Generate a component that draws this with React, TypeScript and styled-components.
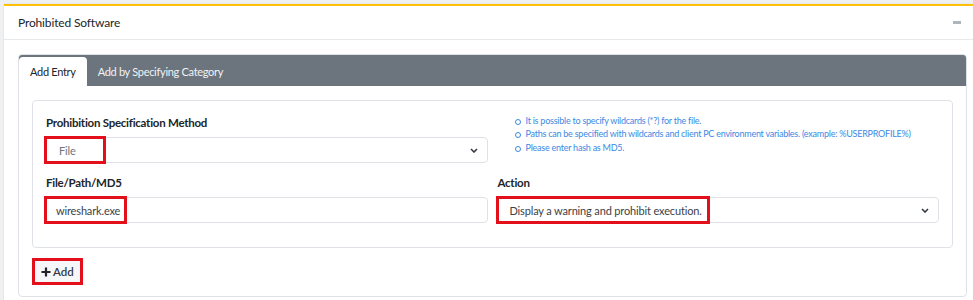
import React from "react";
import styled, { createGlobalStyle } from "styled-components";

const GlobalStyle = createGlobalStyle`
  html, body {
    margin: 0;
    padding: 0;
    background: #eef0f2;
    overflow: hidden;
    font-family: Lato, "Liberation Sans", sans-serif;
    color: #212529;
  }
  * { box-sizing: border-box; }
`;

const Page = styled.div`
  padding: 4px 0 0 4px;
  width: 990px;
`;

const Card = styled.section`
  width: 977px;
  background: #fff;
  border-top: 2px solid #ffc107;
  box-shadow: 0 0 1px rgba(0, 0, 0, 0.2);
`;

const CardHeader = styled.header`
  display: flex;
  align-items: center;
  justify-content: space-between;
  height: 34px;
  padding: 0 14px;
  border-bottom: 1px solid #e6e8ea;
`;

const CardTitle = styled.h3`
  margin: 0;
  font-size: 12px;
  letter-spacing: -0.15px;
  font-weight: 400;
  color: #212529;
`;

const Minus = styled.span`
  display: block;
  width: 8px;
  height: 2.5px;
  margin-right: 6px;
  background: #adb5bd;
`;

const CardBody = styled.div`
  padding: 14px;
`;

const TabCard = styled.div`
  border: 1px solid #dee2e6;
  border-radius: 4px;
  overflow: hidden;
`;

const TabBar = styled.div`
  display: flex;
  align-items: flex-end;
  height: 31px;
  background: #6c757d;
  padding-top: 2px;
`;

const Tab = styled.div<{ $active?: boolean }>`
  height: 29px;
  display: flex;
  align-items: center;
  padding: 0 11px;
  font-size: 11px;
  letter-spacing: -0.3px;
  border-radius: 4px 4px 0 0;
  background: ${(p) => (p.$active ? "#fff" : "transparent")};
  color: ${(p) => (p.$active ? "#212529" : "#f1f3f5")};
`;

const TabPane = styled.div`
  padding: 14px 13px 13px 13px;
`;

const FormBox = styled.div`
  display: grid;
  grid-template-columns: 1fr 1fr;
  column-gap: 9px;
  row-gap: 11px;
  padding: 13px 13px 24px 12px;
  border: 1px solid #dee2e6;
  border-radius: 4px;
`;

const Field = styled.div`
  display: flex;
  flex-direction: column;
`;

const Label = styled.label`
  font-size: 11.5px;
  letter-spacing: -0.25px;
  font-weight: 700;
  line-height: 18px;
  margin-bottom: 5px;
  padding-left: 1px;
`;

const Control = styled.div<{ $pad?: number }>`
  position: relative;
  height: 26px;
  display: flex;
  align-items: center;
  justify-content: space-between;
  border: 1px solid #dee2e6;
  border-radius: 4px;
  padding: 0 9px 0 ${(p) => p.$pad ?? 12}px;
  font-size: 11px;
  letter-spacing: -0.15px;
  background: #fff;
`;

const ControlText = styled.span<{ $muted?: boolean }>`
  color: ${(p) => (p.$muted ? "#6c757d" : "#3d4247")};
`;

const Highlight = styled.span<{ $w: number }>`
  position: absolute;
  left: -2px;
  top: -2px;
  width: ${(p) => p.$w}px;
  height: calc(100% + 4px);
  border: 3px solid #e3101b;
  pointer-events: none;
`;

const HelpList = styled.ul`
  margin: 0;
  padding: 0 0 0 18px;
  list-style: none;
  color: #3b89e3;
  font-size: 9px;
  letter-spacing: -0.24px;
  line-height: 13.3px;
`;

const HelpItem = styled.li`
  position: relative;
  padding-left: 11px;
  white-space: nowrap;
  &::before {
    content: "";
    position: absolute;
    left: 0;
    top: 5px;
    width: 4px;
    height: 4px;
    border: 1px solid #3b89e3;
    border-radius: 50%;
  }
`;

const Actions = styled.div`
  padding-top: 12px;
  padding-left: 2px;
`;

const AddButton = styled.button`
  position: relative;
  display: inline-flex;
  align-items: center;
  gap: 2px;
  height: 23px;
  padding: 0 9px 0 7px;
  border: none;
  background: #f6f7f8;
  font-family: inherit;
  font-size: 11.5px;
  font-weight: 600;
  color: #343a40;
`;

const Chevron = () => (
  <svg width="8" height="5" viewBox="0 0 8 5">
    <path d="M1 1l3 3 3-3" fill="none" stroke="#343a40" strokeWidth="1.6" />
  </svg>
);

const PlusIcon = () => (
  <svg width="10" height="10" viewBox="0 0 10 10">
    <path d="M5 0.5v9M0.5 5h9" stroke="#212529" strokeWidth="2.2" />
  </svg>
);

export default function App() {
  return (
    <>
      <GlobalStyle />
      <Page>
        <Card>
          <CardHeader>
            <CardTitle>Prohibited Software</CardTitle>
            <Minus />
          </CardHeader>
          <CardBody>
            <TabCard>
              <TabBar>
                <Tab $active>Add Entry</Tab>
                <Tab>Add by Specifying Category</Tab>
              </TabBar>
              <TabPane>
                <FormBox>
                  <Field>
                    <Label>Prohibition Specification Method</Label>
                    <Control $pad={13}>
                      <ControlText $muted>File</ControlText>
                      <Chevron />
                      <Highlight $w={62} />
                    </Control>
                  </Field>
                  <HelpList>
                    <HelpItem>It is possible to specify wildcards (*?) for the file.</HelpItem>
                    <HelpItem>
                      Paths can be specified with wildcards and client PC environment variables. (example: %USERPROFILE%)
                    </HelpItem>
                    <HelpItem>Please enter hash as MD5.</HelpItem>
                  </HelpList>
                  <Field>
                    <Label>File/Path/MD5</Label>
                    <Control $pad={10}>
                      <ControlText>wireshark.exe</ControlText>
                      <Highlight $w={83} />
                    </Control>
                  </Field>
                  <Field>
                    <Label>Action</Label>
                    <Control $pad={12}>
                      <ControlText>Display a warning and prohibit execution.</ControlText>
                      <Chevron />
                      <Highlight $w={214} />
                    </Control>
                  </Field>
                </FormBox>
                <Actions>
                  <AddButton>
                    <PlusIcon />
                    Add
                    <Highlight $w={51} />
                  </AddButton>
                </Actions>
              </TabPane>
            </TabCard>
          </CardBody>
        </Card>
      </Page>
    </>
  );
}
